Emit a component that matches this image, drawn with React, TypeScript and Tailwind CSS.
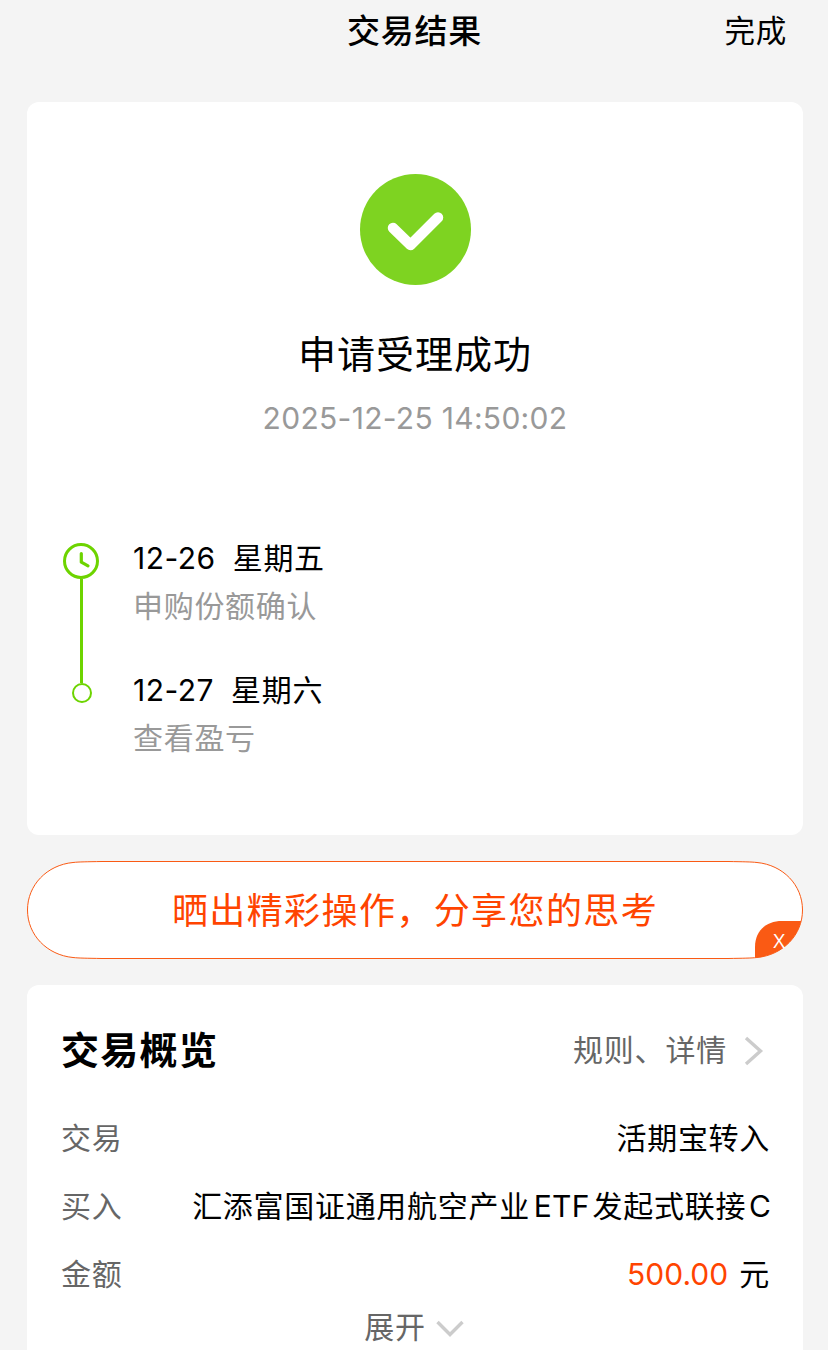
import clsx from "clsx";
import React from "react";

interface Step {
  date: string;
  weekday: string;
  label: string;
}

interface RowProps {
  label: string;
  children: React.ReactNode;
}

const steps: Step[] = [
  { date: "12-26", weekday: "星期五", label: "申购份额确认" },
  { date: "12-27", weekday: "星期六", label: "查看盈亏" },
];

const Header = () => (
  <header className="grid h-[62px] grid-cols-3 items-center pr-[41px]">
    <span />
    <h1 className="-mr-[42px] text-center text-[33px] leading-[62px] font-medium tracking-[0.8px]">交易结果</h1>
    <button className="text-right text-[30.5px] leading-[62px] tracking-[0.8px]">完成</button>
  </header>
);

const SuccessIcon = () => (
  <svg className="h-[111px] w-[111px]" viewBox="0 0 111 111" fill="none">
    <circle cx="55.5" cy="55.5" r="55.5" fill="#7ed321" />
    <path d="M33 54L50.500 71L78 43.500" stroke="#fff" strokeWidth="10.500" strokeLinecap="round" strokeLinejoin="round" />
  </svg>
);

const ClockIcon = () => (
  <svg className="h-9 w-9" viewBox="0 0 36 36" fill="none" stroke="#6dd400">
    <circle cx="18" cy="18" r="16.500" strokeWidth="3" />
    <path d="M18.300 10.500V19.200L25 22.800" strokeWidth="3.200" strokeLinecap="round" strokeLinejoin="round" />
  </svg>
);

const Timeline = () => (
  <div className="mt-[96px] flex pl-9">
    <div className="mt-[9px] flex w-9 flex-col items-center">
      <ClockIcon />
      <div className="h-[104px] w-[3px] bg-[#6dd400]" />
      <div className="ml-px h-5 w-5 rounded-full border-2 border-[#6dd400]" />
    </div>
    <div className="ml-[34px] flex flex-col gap-9">
      {steps.map(({ date, weekday, label }) => (
        <div key={date} className="text-[30px] leading-[48px] tracking-[0.7px]">
          <div className="flex">
            <span className="tracking-[0.5px]">{date}</span>
            <span className="ml-[17px]">{weekday}</span>
          </div>
          <div className="text-[#999]">{label}</div>
        </div>
      ))}
    </div>
  </div>
);

const ShareBanner = () => (
  <div className="relative mt-[26px] flex h-[98px] items-center justify-center">
    <svg className="absolute inset-0" width="776" height="98" viewBox="0 0 776 98">
      <defs>
        <clipPath id="pill">
          <path d="M75 .5H701C716 .8 724 .8 730 1.500C756 4 775.500 24 775.500 49S756 94 730 96.500C724 97.200 716 97.200 701 97.500H75C60 97.200 52 97.200 46 96.500C20 94 .5 74 .5 49S20 4 46 1.500C52 .8 60 .8 75 .5Z" />
        </clipPath>
      </defs>
      <g clipPath="url(#pill)">
        <path d="M0 0H776V98H0Z" fill="#fff" />
        <path d="M728 98V86C728 70 739 60 755 60H776V98Z" fill="#fa5a14" />
      </g>
      <path
        d="M75 .5H701C716 .8 724 .8 730 1.500C756 4 775.500 24 775.500 49S756 94 730 96.500C724 97.200 716 97.200 701 97.500H75C60 97.200 52 97.200 46 96.500C20 94 .5 74 .5 49S20 4 46 1.500C52 .8 60 .8 75 .5Z"
        fill="none"
        stroke="#fa5a14"
      />
    </svg>
    <span className="relative pt-0.5 text-[36px] leading-[96px] tracking-[1.4px] text-[#ff4400]">晒出精彩操作，分享您的思考</span>
    <button className="absolute right-[18px] bottom-[7px] font-['Open_Sans'] text-[20.5px] leading-6 text-white">X</button>
  </div>
);

const Row: React.FC<RowProps> = ({ label, children }) => (
  <div className="-mr-px flex h-[68px] items-center justify-between text-[30px] tracking-[0.7px] whitespace-nowrap">
    <span className="text-[#666]">{label}</span>
    <span>{children}</span>
  </div>
);

const Chevron = ({ down = false }: { down?: boolean }) => (
  <svg
    className={clsx(down ? "mt-0.5 h-[17px] w-[28px]" : "mt-0.5 h-[30px] w-[20px]")}
    viewBox={down ? "0 0 28 17" : "0 0 20 30"}
    fill="none"
    stroke="#ccc"
    strokeWidth="3.400"
  >
    <path d={down ? "M1.500 2L14 14.500L26.500 2" : "M2 2L16.500 15L2 28"} />
  </svg>
);

const Overview = () => (
  <section className="mt-[26px] h-[400px] rounded-t-xl bg-white px-[34px] pt-[30px]">
    <div className="flex h-[70px] items-center justify-between">
      <h2 className="text-[38px] font-bold tracking-[1.3px]">交易概览</h2>
      <div className="mr-[5px] flex items-center gap-[17px] text-[30px] tracking-[0.8px] text-[#666]">
        规则、详情
        <Chevron />
      </div>
    </div>
    <div className="mt-[19px]">
      <Row label="交易">活期宝转入</Row>
      <Row label="买入">
        <span className="-mr-px">
          汇添富国证通用航空产业<span className="mr-[3px] ml-1 tracking-[0.2px]">ETF</span>发起式联接
          <span className="ml-[3px] tracking-normal">C</span>
        </span>
      </Row>
      <Row label="金额">
        <span className="mr-[2px] tracking-normal text-[#ff4400]">500.00</span> 元
      </Row>
    </div>
    <div className="mt-px -ml-[2px] flex h-9 items-center justify-center gap-[10px] text-[30px] tracking-[0.7px] text-[#666]">
      展开
      <Chevron down />
    </div>
  </section>
);

const App = () => (
  <div className="h-[1350px] w-[828px] overflow-hidden bg-[#f4f4f4] font-['Inter','Noto_Sans_CJK_SC',sans-serif] text-black">
    <Header />
    <main className="mt-10 mr-[25px] ml-[27px]">
      <section className="h-[733px] rounded-xl bg-white pt-[72px]">
        <div className="flex flex-col items-center">
          <SuccessIcon />
          <div className="mt-[41px] text-[38px] leading-[56px] tracking-[1px]">申请受理成功</div>
          <div className="mt-4 text-[30px] leading-10 tracking-[0.3px] text-[#999]">2025-12-25 14:50:02</div>
        </div>
        <Timeline />
      </section>
      <ShareBanner />
      <Overview />
    </main>
  </div>
);

export default App;
